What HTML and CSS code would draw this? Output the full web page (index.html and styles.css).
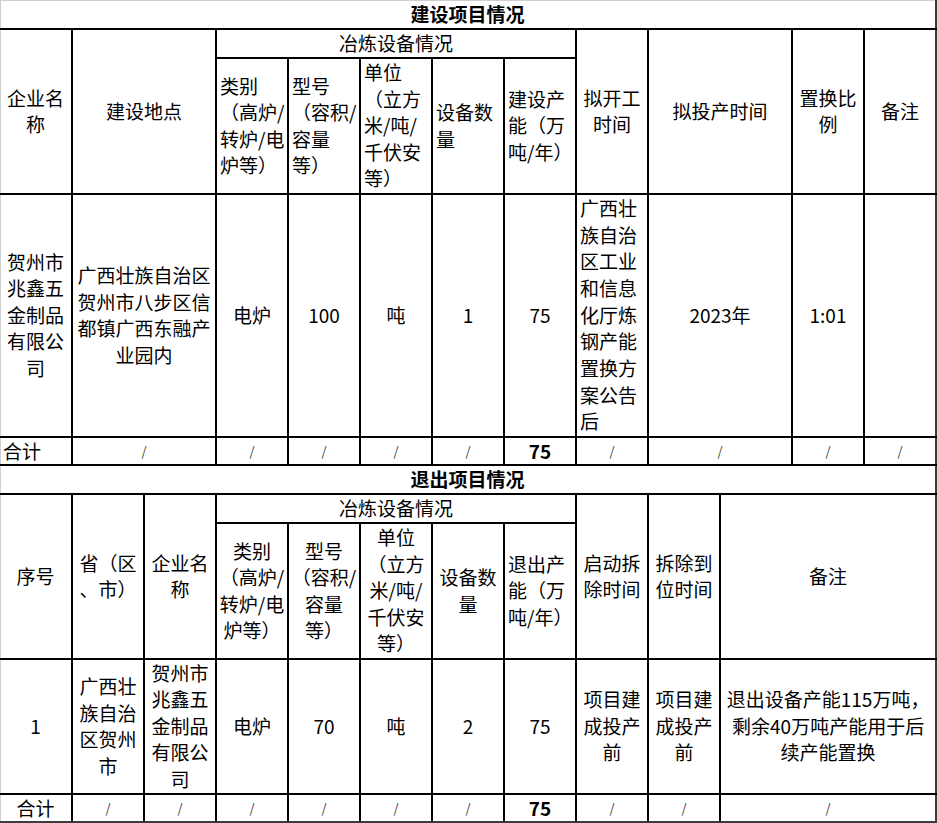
FILE: index.html
```html
<!DOCTYPE html>
<html lang="zh-CN">
<head>
<meta charset="utf-8">
<title>建设项目情况</title>
<link rel="stylesheet" href="styles.css">
</head>
<body>
<div class="frame">
<table class="sheet">
<colgroup>
<col><col><col><col><col><col><col><col><col><col><col><col><col>
</colgroup>
<tbody>
<tr class="r-title"><td colspan="13" class="title e">建设项目情况</td></tr>
<tr class="r-sub">
  <td rowspan="2">企业名<br>称</td>
  <td colspan="2" rowspan="2">建设地点</td>
  <td colspan="5">冶炼设备情况</td>
  <td rowspan="2">拟开工<br>时间</td>
  <td colspan="2" rowspan="2">拟投产时间</td>
  <td rowspan="2">置换比<br>例</td>
  <td rowspan="2" class="e">备注</td>
</tr>
<tr class="r-head">
  <td class="l">类别<br>（高炉/<br>转炉/电<br>炉等）</td>
  <td class="l">型号<br>（容积/<br>容量<br>等）</td>
  <td class="l">单位<br>（立方<br>米/吨/<br>千伏安<br>等）</td>
  <td class="l">设备数<br>量</td>
  <td class="l">建设产<br>能（万<br>吨/年）</td>
</tr>
<tr class="r-data1">
  <td>贺州市<br>兆鑫五<br>金制品<br>有限公<br>司</td>
  <td colspan="2">广西壮族自治区<br>贺州市八步区信<br>都镇广西东融产<br>业园内</td>
  <td>电炉</td>
  <td>100</td>
  <td>吨</td>
  <td>1</td>
  <td>75</td>
  <td class="l long">广西壮<br>族自治<br>区工业<br>和信息<br>化厅炼<br>钢产能<br>置换方<br>案公告<br>后</td>
  <td colspan="2">2023年</td>
  <td>1:01</td>
  <td class="e"></td>
</tr>
<tr class="r-total">
  <td class="l">合计</td>
  <td colspan="2" class="sl">/</td>
  <td class="sl">/</td>
  <td class="sl">/</td>
  <td class="sl">/</td>
  <td class="sl">/</td>
  <td class="sum">75</td>
  <td class="sl">/</td>
  <td colspan="2" class="sl">/</td>
  <td class="sl">/</td>
  <td class="sl e">/</td>
</tr>
<tr class="r-title2"><td colspan="13" class="title e">退出项目情况</td></tr>
<tr class="r-sub2">
  <td rowspan="2">序号</td>
  <td rowspan="2">省（区<br>、市）</td>
  <td rowspan="2">企业名<br>称</td>
  <td colspan="5">冶炼设备情况</td>
  <td rowspan="2">启动拆<br>除时间</td>
  <td rowspan="2">拆除到<br>位时间</td>
  <td colspan="3" rowspan="2" class="e">备注</td>
</tr>
<tr class="r-head">
  <td>类别<br>（高炉/<br>转炉/电<br>炉等）</td>
  <td>型号<br>（容积/<br>容量<br>等）</td>
  <td>单位<br>（立方<br>米/吨/<br>千伏安<br>等）</td>
  <td>设备数<br>量</td>
  <td class="l">退出产<br>能（万<br>吨/年）</td>
</tr>
<tr class="r-data2">
  <td>1</td>
  <td>广西壮<br>族自治<br>区贺州<br>市</td>
  <td>贺州市<br>兆鑫五<br>金制品<br>有限公<br>司</td>
  <td>电炉</td>
  <td>70</td>
  <td>吨</td>
  <td>2</td>
  <td>75</td>
  <td>项目建<br>成投产<br>前</td>
  <td>项目建<br>成投产<br>前</td>
  <td colspan="3" class="e">退出设备产能115万吨，<br>剩余40万吨产能用于后<br>续产能置换</td>
</tr>
<tr class="r-total last">
  <td>合计</td>
  <td class="sl">/</td>
  <td class="sl">/</td>
  <td class="sl">/</td>
  <td class="sl">/</td>
  <td class="sl">/</td>
  <td class="sl">/</td>
  <td class="sum">75</td>
  <td class="sl">/</td>
  <td class="sl">/</td>
  <td colspan="3" class="sl e">/</td>
</tr>
</tbody>
</table>
</div>
</body>
</html>
```

FILE: styles.css
```css
html, body {
  margin: 0;
  padding: 0;
  background: #fff;
}

body {
  font-family: "Noto Sans CJK SC", "Noto Sans", sans-serif;
  font-size: 19px;
  line-height: 26.5px;
  color: #000;
}

.frame {
  width: 937px;
  height: 823px;
  overflow: hidden;
  box-shadow: inset 1px 1px 0 #cfcfcf;
}

.sheet {
  border-collapse: collapse;
  table-layout: fixed;
  width: 937px;
  border-top: hidden;
  border-left: hidden;
}

.sheet col {
  width: 72px;
}

.sheet td {
  border: 2px solid #000;
  padding: 0 2px;
  text-align: center;
  vertical-align: middle;
  white-space: nowrap;
  overflow: hidden;
}

.sheet td.l {
  text-align: left;
  padding-left: 3px;
}

.sheet td.title {
  border-left: none;
  border-top: none;
  font-weight: bold;
}

.sheet td.e {
  border-right-color: #3c3c3c;
}

.sheet tr.last td {
  border-bottom-color: #3c3c3c;
}

.sheet td.sl {
  font-size: 13px;
  color: #444;
}

.sheet td.sum {
  font-weight: bold;
}

.sheet td.long {
  line-height: 26.7px;
}

.r-title { height: 29px; }
.r-sub { height: 28px; }
.r-head { height: 136px; }
.r-data1 { height: 243px; }
.r-total { height: 28px; }
.r-title2 { height: 28px; }
.r-sub2 { height: 29px; }
.r-data2 { height: 135px; }
```
